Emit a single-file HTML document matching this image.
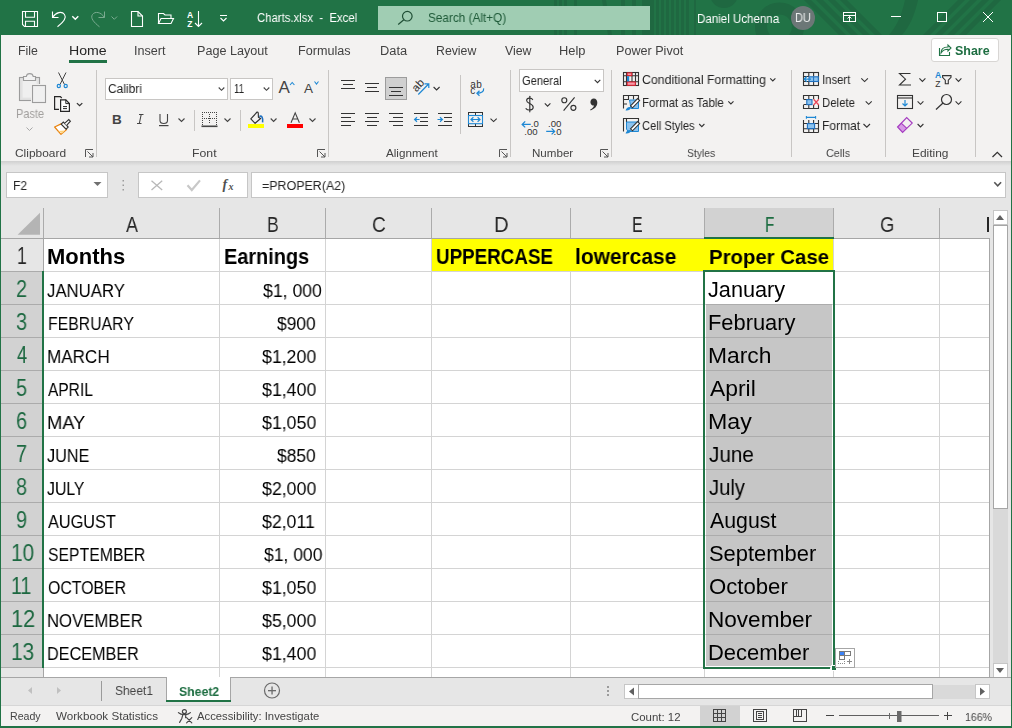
<!DOCTYPE html>
<html><head><meta charset="utf-8">
<style>
html,body{margin:0;padding:0;width:1012px;height:728px;overflow:hidden;background:#f3f2f1;}
.t{position:absolute;font-family:"Liberation Sans",sans-serif;white-space:pre;will-change:transform;}
svg{position:absolute;left:0;top:0;}
</style></head><body>
<svg width="1012" height="728" viewBox="0 0 1012 728" shape-rendering="crispEdges">
<defs>
<linearGradient id="sh" x1="0" y1="0" x2="0" y2="1"><stop offset="0" stop-color="#d0d0d0"/><stop offset="1" stop-color="#e6e6e6"/></linearGradient>
<clipPath id="tb"><rect x="0" y="0" width="1012" height="35"/></clipPath>
</defs>
<!-- title bar -->
<rect x="0" y="0" width="1012" height="35" fill="#217346"/>
<g clip-path="url(#tb)" fill="#1f6841" shape-rendering="geometricPrecision">
  <rect x="554" y="0" width="3" height="35"/><rect x="559" y="0" width="3" height="35"/><rect x="564" y="0" width="3" height="35"/><rect x="574" y="0" width="3" height="35"/>
  <path d="M602,0 L606,0 L612,35 L608,35 Z"/>
  <rect x="621" y="0" width="4" height="35"/><rect x="632" y="0" width="4" height="35"/>
  <rect x="642" y="0" width="12" height="35"/>
  <rect x="656" y="0" width="3" height="35"/><rect x="661" y="0" width="3" height="35"/><rect x="666" y="0" width="3" height="35"/><rect x="671" y="0" width="3" height="35"/><rect x="676" y="0" width="3" height="35"/><rect x="681" y="0" width="3" height="35"/><rect x="686" y="0" width="3" height="35"/><rect x="694" y="0" width="2" height="35"/>
  <circle cx="724" cy="-6" r="14"/>
  <circle cx="779.5" cy="27" r="18.5" fill="none" stroke="#1f6841" stroke-width="12"/>
  <path d="M804,0 L811,0 L846,35 L839,35 Z"/><path d="M816,0 L823,0 L858,35 L851,35 Z"/><path d="M828,0 L835,0 L870,35 L863,35 Z"/><path d="M840,0 L847,0 L882,35 L875,35 Z"/>
  <path d="M905,0 L918,0 C915,14 910,26 902,35 L889,35 C897,26 902,14 905,0 Z"/>
  <path d="M958,0 L965,0 L930,35 L923,35 Z"/><path d="M970,0 L977,0 L942,35 L935,35 Z"/><path d="M982,0 L989,0 L954,35 L947,35 Z"/><path d="M994,0 L1001,0 L966,35 L959,35 Z"/>
</g>
<!-- search box -->
<rect x="378" y="6" width="272" height="24" fill="#a0cdb3"/>
<!-- ribbon shadow & formula area -->
<rect x="0" y="161" width="1012" height="47" fill="#e6e6e6"/>
<rect x="0" y="161" width="1012" height="5" fill="url(#sh)"/>
<!-- name box, button box, formula box -->
<rect x="6.5" y="172.5" width="101" height="25" fill="#fff" stroke="#c6c6c6"/>
<rect x="138.5" y="172.5" width="109" height="25" fill="#fff" stroke="#c6c6c6"/>
<rect x="251.5" y="172.5" width="754" height="25" fill="#fff" stroke="#c6c6c6"/>
<!-- header row & row headers -->
<rect x="0" y="208" width="990" height="30" fill="#e6e6e6"/>
<rect x="0" y="238" width="43" height="439" fill="#e6e6e6"/>
<rect x="1" y="271" width="42" height="396" fill="#d2d2d2"/>
<rect x="704" y="208" width="129" height="30" fill="#d2d2d2"/>
<!-- grid white -->
<rect x="44" y="239" width="945" height="438" fill="#fff"/>
<!-- gridlines -->
<g fill="#d4d4d4">
<rect x="219" y="239" width="1" height="438"/><rect x="325" y="239" width="1" height="438"/><rect x="431" y="239" width="1" height="438"/><rect x="570" y="239" width="1" height="438"/><rect x="704" y="239" width="1" height="438"/><rect x="833" y="239" width="1" height="438"/><rect x="939" y="239" width="1" height="438"/>
<rect x="44" y="271" width="945" height="1"/><rect x="44" y="304" width="945" height="1"/><rect x="44" y="337" width="945" height="1"/><rect x="44" y="370" width="945" height="1"/><rect x="44" y="403" width="945" height="1"/><rect x="44" y="436" width="945" height="1"/><rect x="44" y="469" width="945" height="1"/><rect x="44" y="502" width="945" height="1"/><rect x="44" y="535" width="945" height="1"/><rect x="44" y="568" width="945" height="1"/><rect x="44" y="601" width="945" height="1"/><rect x="44" y="634" width="945" height="1"/><rect x="44" y="667" width="945" height="1"/>
</g>
<!-- header separators -->
<g fill="#ababab">
<rect x="219" y="208" width="1" height="30"/><rect x="325" y="208" width="1" height="30"/><rect x="431" y="208" width="1" height="30"/><rect x="570" y="208" width="1" height="30"/><rect x="704" y="208" width="1" height="30"/><rect x="833" y="208" width="1" height="30"/><rect x="939" y="208" width="1" height="30"/>
<rect x="43" y="208" width="1" height="30"/>
<rect x="1" y="271" width="42" height="1"/><rect x="1" y="304" width="42" height="1"/><rect x="1" y="337" width="42" height="1"/><rect x="1" y="370" width="42" height="1"/><rect x="1" y="403" width="42" height="1"/><rect x="1" y="436" width="42" height="1"/><rect x="1" y="469" width="42" height="1"/><rect x="1" y="502" width="42" height="1"/><rect x="1" y="535" width="42" height="1"/><rect x="1" y="568" width="42" height="1"/><rect x="1" y="601" width="42" height="1"/><rect x="1" y="634" width="42" height="1"/><rect x="1" y="667" width="42" height="1"/>
</g>
<rect x="0" y="238" width="990" height="1" fill="#a6a6a6"/>
<rect x="43" y="238" width="1" height="439" fill="#a6a6a6"/>
<!-- select all triangle -->
<polygon points="40,212.8 40,234.7 17.6,234.7" fill="#b4b4b4" shape-rendering="geometricPrecision"/>
<rect x="986.6" y="217" width="2.4" height="15" fill="#262626"/>
<!-- yellow -->
<rect x="432" y="239" width="401" height="32" fill="#ffff00"/>
<!-- selection fill -->
<rect x="706" y="305" width="126" height="361" fill="#c6c6c6"/>
<g fill="#acacac"><rect x="706" y="304" width="126" height="1"/><rect x="706" y="337" width="126" height="1"/><rect x="706" y="370" width="126" height="1"/><rect x="706" y="403" width="126" height="1"/><rect x="706" y="436" width="126" height="1"/><rect x="706" y="469" width="126" height="1"/><rect x="706" y="502" width="126" height="1"/><rect x="706" y="535" width="126" height="1"/><rect x="706" y="568" width="126" height="1"/><rect x="706" y="601" width="126" height="1"/><rect x="706" y="634" width="126" height="1"/></g>
<!-- selection border -->
<g fill="#217346">
<rect x="703" y="270" width="2" height="399"/>
<rect x="833" y="270" width="2" height="395"/>
<rect x="703" y="270" width="132" height="2"/>
<rect x="703" y="667" width="127" height="2"/>
<rect x="831" y="665" width="5" height="5" stroke="#fff" stroke-width="1"/>
<rect x="42" y="271" width="2" height="397"/>
<rect x="704" y="237" width="130" height="2"/>
</g>
<!-- paste options -->
<rect x="835.5" y="648.5" width="19" height="19" fill="#fff" stroke="#a6a6a6"/>
<rect x="839.5" y="651.5" width="5" height="4" fill="#3b82f6" stroke="#7a7a7a"/>
<rect x="844.5" y="651.5" width="6" height="4" fill="#fff" stroke="#7a7a7a"/>
<rect x="839.5" y="655.5" width="5" height="4" fill="#fff" stroke="#7a7a7a"/>
<g fill="#8a8a8a"><rect x="838" y="661" width="1" height="1"/><rect x="840" y="663" width="1" height="1"/><rect x="842" y="663" width="1" height="1"/><rect x="844" y="663" width="1" height="1"/><rect x="838" y="663" width="1" height="1"/><rect x="844" y="661" width="1" height="1"/><rect x="847" y="661" width="5" height="1"/><rect x="849" y="659" width="1" height="5"/></g>
<!-- vertical scrollbar -->
<rect x="989" y="238" width="1" height="440" fill="#a6a6a6"/>
<rect x="990" y="208" width="21" height="470" fill="#e6e6e6"/>
<rect x="993" y="225" width="15" height="438" fill="#d9d9d9"/>
<rect x="993.5" y="210.5" width="14" height="14" fill="#fff" stroke="#c6c6c6"/>
<rect x="993.5" y="225.5" width="14" height="283" fill="#fff" stroke="#a6a6a6"/>
<rect x="993.5" y="663.5" width="14" height="14" fill="#fff" stroke="#c6c6c6"/>
<polygon points="996,220 1004,220 1000,215" fill="#606060" shape-rendering="geometricPrecision"/>
<polygon points="996,668 1004,668 1000,673" fill="#606060" shape-rendering="geometricPrecision"/>
<!-- sheet tab bar -->
<rect x="1" y="677" width="1010" height="28" fill="#e6e6e6"/>
<rect x="0" y="677" width="1011" height="1" fill="#a6a6a6"/>
<rect x="166" y="677" width="65" height="25" fill="#fff"/>
<rect x="166" y="677" width="1" height="25" fill="#a6a6a6"/>
<rect x="230" y="677" width="1" height="25" fill="#a6a6a6"/>
<rect x="166" y="700" width="65" height="2" fill="#217346"/>
<rect x="101" y="681" width="1" height="20" fill="#9b9b9b"/>
<polygon points="32,687 32,694 28,690.5" fill="#c0c0c0" shape-rendering="geometricPrecision"/>
<polygon points="57,687 57,694 61,690.5" fill="#c0c0c0" shape-rendering="geometricPrecision"/>
<g shape-rendering="geometricPrecision"><circle cx="272" cy="690.5" r="7.5" fill="none" stroke="#6a6a6a" stroke-width="1.2"/><rect x="268" y="690" width="8" height="1.3" fill="#6a6a6a"/><rect x="271.4" y="686.5" width="1.3" height="8" fill="#6a6a6a"/></g>
<g fill="#9b9b9b"><rect x="607" y="686" width="2" height="2"/><rect x="607" y="690" width="2" height="2"/><rect x="607" y="694" width="2" height="2"/></g>
<!-- h scrollbar -->
<rect x="639" y="685" width="336" height="14" fill="#d9d9d9"/>
<rect x="624.5" y="684.5" width="14" height="14" fill="#fff" stroke="#c6c6c6"/>
<rect x="638.5" y="684.5" width="294" height="14" fill="#fff" stroke="#a6a6a6"/>
<rect x="975.5" y="684.5" width="14" height="14" fill="#fff" stroke="#c6c6c6"/>
<polygon points="634,687.5 634,695.5 629,691.5" fill="#606060" shape-rendering="geometricPrecision"/>
<polygon points="980,687.5 980,695.5 985,691.5" fill="#606060" shape-rendering="geometricPrecision"/>
<!-- status bar -->
<rect x="1" y="705" width="1010" height="21" fill="#f3f2f1"/>
<rect x="1" y="705" width="1010" height="1" fill="#d6d6d6"/>
<rect x="700" y="706" width="40" height="20" fill="#d2d2d2"/>
<!-- window border -->
<rect x="0" y="35" width="1" height="693" fill="#217346"/>
<rect x="1011" y="35" width="1" height="693" fill="#217346"/>
<rect x="0" y="726" width="1012" height="2" fill="#217346"/>
</svg>
<svg width="1012" height="728" viewBox="0 0 1012 728" fill="none" stroke-linecap="butt">
<!-- ===== title bar icons ===== -->
<g stroke="#fff" stroke-width="1.1">
  <path d="M22.5,11.5 H37.5 V26.5 H24.5 L22.5,24.5 Z"/>
  <path d="M25.5,11.5 V17.3 H34.5 V11.5"/>
  <path d="M25.5,26.5 V21.3 H34.5 V26.5"/>
  <path d="M52.5,11.5 V17.5 H58.5"/>
  <path d="M52.8,17.2 C56,12 62,11 64.5,14.5 C67,18 63,22.5 57.5,26.8"/>
  <path d="M72.3,16.3 L75.3,19.3 L78.3,16.3" stroke-width="1.4"/>
  <path d="M131.5,11.5 H138 L142.5,16 V26.5 H131.5 Z"/>
  <path d="M138,11.5 V16 H142.5"/>
  <path d="M158.5,23.5 V13.5 H163.5 L165,15 H171 V18"/>
  <path d="M158.5,23.5 L161,18.5 H173.5 L171,23.5 Z"/>
  <path d="M198.5,11 V26.5 M195,23 L198.5,26.5 L202,23"/>
  <path d="M220,15.5 H227 M220.5,18 L223.5,21 L226.5,18"/>
</g>
<g stroke="#fff" stroke-width="1" opacity="0.4">
  <path d="M104.5,11.5 V17.5 H98.5"/>
  <path d="M104.2,17.2 C101,12 95,11 92.5,14.5 C90,18 94,22.5 99.5,26.8"/>
  <path d="M111.5,16.5 L114.3,19.3 L117.1,16.5"/>
</g>
<text x="187" y="18.2" font-family="Liberation Sans" font-size="8.5" font-weight="bold" fill="#fff">A</text>
<text x="187.3" y="26.8" font-family="Liberation Sans" font-size="8.5" font-weight="bold" fill="#fff">Z</text>
<!-- search icon -->
<g stroke="#1f4e35" stroke-width="1.2"><circle cx="407.3" cy="16.2" r="4.8"/><path d="M403.8,19.8 L398.2,24.5"/></g>
<!-- avatar -->
<circle cx="803" cy="17.9" r="12" fill="#6c7777"/>
<!-- window controls -->
<g stroke="#fff" stroke-width="1">
  <rect x="843.5" y="12.5" width="12" height="9"/>
  <path d="M843.5,15.5 H855.5 M849.5,21 V16.5 M847.5,18.5 L849.5,16.5 L851.5,18.5"/>
  <path d="M891,16.5 H901"/>
  <rect x="937.5" y="12.5" width="9" height="9"/>
  <path d="M983,12 L993,22 M993,12 L983,22"/>
</g>
<!-- tab underline -->
<rect x="69" y="60" width="38" height="3" fill="#217346"/>
<!-- share button -->
<rect x="931.5" y="38.5" width="67" height="23" rx="2.5" fill="#fff" stroke="#d8d6d4"/>
<g stroke="#217346" stroke-width="1.1">
  <path d="M939.5,48 V55.5 H949.5 V52"/>
  <path d="M941,53 C941,48.5 944,47 948,47 V45 L951,48 L948,51 V49.3 C945,49.3 942.5,50.5 941,53 Z"/>
</g>
<!-- ===== ribbon separators ===== -->
<g fill="#c8c6c4">
  <rect x="96" y="70" width="1" height="87"/>
  <rect x="328" y="70" width="1" height="87"/>
  <rect x="510" y="70" width="1" height="87"/>
  <rect x="611" y="70" width="1" height="87"/>
  <rect x="791" y="70" width="1" height="87"/>
  <rect x="885" y="70" width="1" height="87"/>
  <rect x="975" y="70" width="1" height="87"/>
  <rect x="194" y="110" width="1" height="21"/>
  <rect x="240" y="110" width="1" height="21"/>
  <rect x="460" y="75" width="1" height="59"/>
</g>
<!-- clipboard group -->
<g stroke="#9c9c9c" stroke-width="1.1">
  <rect x="19.5" y="77.5" width="20" height="23" fill="#e2e2e2"/>
  <rect x="22.6" y="80.6" width="14" height="17" fill="#efefef" stroke="none"/>
  <path d="M23.5,80.5 V76.5 H26.3 C26.8,72.6 32.7,72.6 33.2,76.5 H35.5 V80.5 Z" fill="#f2f2f2"/>
  <rect x="31" y="84" width="16" height="20" fill="#f3f2f1" stroke="none"/>
  <rect x="32.5" y="85.5" width="13" height="17" fill="#f0f0f0"/>
</g>
<path d="M26.5,127.5 L29.5,130.5 L32.5,127.5" stroke="#a8a8a8"/>
<g stroke="#444" stroke-width="1">
  <path d="M58.5,72.5 L64.5,84.5 M66,72.5 L60,84.5"/>
</g>
<g stroke="#1e88d4" stroke-width="1.2"><circle cx="58.8" cy="86" r="1.6"/><circle cx="65.7" cy="86" r="1.6"/></g>
<g stroke="#262626" stroke-width="1.2">
  <path d="M59,109.4 H54.6 V96.6 H60.3 L61.8,98"/>
  <path d="M60.6,111.4 V99.8 H65.8 L69.4,103.6 V111.4 Z" fill="#fff"/>
  <path d="M65.8,99.8 V103.6 H69.4" stroke-width="1"/>
  <path d="M63,106.6 H67 M63,108.6 H67" stroke-width="1"/>
</g>
<path d="M76.9,103.1 L79.6,105.7 L82.3,103.1" stroke="#333" stroke-width="1.3"/>
<g>
  <path d="M54.6,127 L61.6,123.6 L66.6,129.6 L61,134.4 Z" fill="#fff" stroke="#e8830f" stroke-width="1.2" stroke-linejoin="round"/>
  <path d="M58,131 L62.5,133.2 L64.8,130.6 Z" fill="#ffd27a"/>
  <path d="M61.2,124.2 L63.3,122.1 L68.2,127 L66.1,129.1 Z" fill="#fff" stroke="#333" stroke-width="1.1"/>
  <path d="M64.6,123.4 L68.8,119.6 L70.4,121.2 L66.6,125.4" fill="#fff" stroke="#333" stroke-width="1.1"/>
</g>
<!-- font group -->
<rect x="105.5" y="78.5" width="122" height="21" fill="#fff" stroke="#c8c6c4"/>
<rect x="230.5" y="78.5" width="42" height="21" fill="#fff" stroke="#c8c6c4"/>
<g stroke="#444" stroke-width="1.1">
  <path d="M218.7,87.5 L221.5,90.3 L224.3,87.5"/>
  <path d="M263.7,87.5 L266.5,90.3 L269.3,87.5"/>
  <path d="M178.5,118.5 L181.5,121.5 L184.5,118.5"/>
  <path d="M224.5,118.5 L227.5,121.5 L230.5,118.5"/>
  <path d="M270.7,118.5 L273.6,121.5 L276.5,118.5"/>
  <path d="M309.5,118.5 L312.5,121.5 L315.5,118.5"/>
</g>
<text x="278.5" y="93" font-family="Liberation Sans" font-size="17" fill="#444">A</text>
<text x="304" y="93" font-family="Liberation Sans" font-size="13.5" fill="#444">A</text>
<g stroke="#1e88d4" stroke-width="1.1"><path d="M290,85 L292.2,82.5 L294.4,85"/><path d="M314.5,81.5 L316.5,84 L318.5,81.5"/></g>
<text x="112" y="123.8" font-family="Liberation Sans" font-size="13.5" font-weight="bold" fill="#444">B</text>
<path d="M139,114.5 H143.5 M137,123.5 H141.5 M141.2,114.5 L139.3,123.5" stroke="#444" stroke-width="1.1"/>
<path d="M160,114 V120.5 C160,124.5 167.5,124.5 167.5,120.5 V114" stroke="#444" stroke-width="1.1"/>
<rect x="159" y="125" width="9.5" height="1.2" fill="#444"/>
<g fill="#444">
  <path d="M202,112 h1v1h-1z M204,112 h1v1h-1z M206,112 h1v1h-1z M208,112 h1v1h-1z M210,112 h1v1h-1z M212,112 h1v1h-1z M214,112 h1v1h-1z M216,112 h1v1h-1z"/>
  <path d="M202,114 h1v1h-1z M202,116 h1v1h-1z M202,118 h1v1h-1z M202,120 h1v1h-1z M202,122 h1v1h-1z M202,124 h1v1h-1z"/>
  <path d="M216,114 h1v1h-1z M216,116 h1v1h-1z M216,118 h1v1h-1z M216,120 h1v1h-1z M216,122 h1v1h-1z M216,124 h1v1h-1z"/>
  <path d="M209,114 h1v1h-1z M209,116 h1v1h-1z M209,120 h1v1h-1z M209,122 h1v1h-1z M204,118 h1v1h-1z M206,118 h1v1h-1z M208,118 h3v1h-3z M212,118 h1v1h-1z M214,118 h1v1h-1z"/>
  <rect x="201.5" y="125.5" width="16" height="1.6"/>
</g>
<path d="M256.1,113.2 C256.7,111.7 258.3,111.9 258.3,113.4 L258.4,117.2 L260.6,118.5 L255.1,123.3 L250.8,118.9 Z" stroke="#333" stroke-width="1.15" stroke-linejoin="round"/>
<path d="M259.4,116.6 C261.6,115 263.2,117.6 262.6,122.3" stroke="#1e6fbf" stroke-width="1.6"/>
<rect x="248" y="124" width="16" height="4" fill="#ffff00"/>
<path d="M291,122.8 L295.2,112.8 L299.4,122.8 M292.5,119 H298" stroke="#444" stroke-width="1.1"/>
<rect x="287" y="124" width="16" height="4" fill="#ff0000"/>
<!-- dialog launchers -->
<g stroke="#555" stroke-width="1">
  <path d="M85.5,157 V149.5 H93 M87.5,151.5 L93,157 M93,153 V157 H89"/>
  <path d="M317.5,157 V149.5 H325 M319.5,151.5 L325,157 M325,153 V157 H321"/>
  <path d="M499.5,157 V149.5 H507 M501.5,151.5 L507,157 M507,153 V157 H503"/>
  <path d="M600.5,157 V149.5 H608 M602.5,151.5 L608,157 M608,153 V157 H604"/>
</g>
<!-- alignment group -->
<rect x="385.5" y="77.5" width="21" height="22" fill="#d0d0d0" stroke="#9c9c9c"/>
<g stroke="#333" stroke-width="1.05" shape-rendering="crispEdges">
  <path d="M341,80.5 H355 M343,84.5 H353 M341,88.5 H355"/>
  <path d="M365,83.5 H379 M367,87.5 H377 M365,91.5 H379"/>
  <path d="M389,87.5 H403 M391,91.5 H401 M389,95.5 H403"/>
  <path d="M341,113.5 H355 M341,117.5 H351 M341,121.5 H355 M341,125.5 H351"/>
  <path d="M365,113.5 H379 M367,117.5 H377 M365,121.5 H379 M367,125.5 H377"/>
  <path d="M389,113.5 H403 M393,117.5 H403 M389,121.5 H403 M393,125.5 H403"/>
  <path d="M414,113.5 H428 M420,117.5 H428 M420,121.5 H428 M414,125.5 H428"/>
  <path d="M438,113.5 H452 M444,117.5 H452 M444,121.5 H452 M438,125.5 H452"/>
  <path d="M468.5,115 V112.5 H482.5 V115 M468.5,124 V126.5 H482.5 V124 M475.5,112.5 V115 M475.5,124 V126.5"/>
</g>
<g stroke="#333" stroke-width="1.1">
  <path d="M433.6,87 L436.6,90 L439.6,87"/>
  <path d="M490.5,118.6 L493.6,121.6 L496.7,118.6"/>
</g>
<g stroke="#1e88d4" stroke-width="1.2">
  <path d="M419.5,119.5 H414.8 M417,117.2 L414.6,119.5 L417,121.8"/>
  <path d="M437.5,119.5 H442.2 M440,117.2 L442.4,119.5 L440,121.8"/>
  <path d="M418.3,94.5 L428.6,84 M424.5,83.8 H428.8 V88"/>
  <path d="M483.6,88.4 C484.2,91.6 481.2,93.3 477.2,93.3 M479.5,90.8 L476.9,93.3 L479.5,95.8"/>
  <path d="M471.2,119.5 H479.8 M473.4,117.3 L471,119.5 L473.4,121.7 M477.6,117.3 L480,119.5 L477.6,121.7"/>
</g>
<rect x="468.5" y="115.5" width="14" height="8.2" stroke="#1e88d4" stroke-width="1.1"/>
<text x="411.2" y="89.6" font-family="Liberation Sans" font-size="11.2" fill="#333" transform="rotate(-48 417 85)">ab</text>
<text x="470.2" y="87.7" font-family="Liberation Sans" font-size="10" fill="#333" letter-spacing="0.4">ab</text>
<text x="470.2" y="94.3" font-family="Liberation Sans" font-size="10" fill="#333">c</text>
<!-- number group -->
<rect x="519.5" y="69.5" width="84" height="22" fill="#fff" stroke="#c8c6c4"/>
<path d="M594.7,79.8 L597.5,82.6 L600.3,79.8" stroke="#333" stroke-width="1.1"/>
<g stroke="#333" stroke-width="1.15" stroke-linecap="round">
<path d="M532.6,99.6 C531.6,97.6 526.8,97.4 526.6,100.4 C526.4,103.6 533.2,103.4 533.2,107.2 C533.2,110.4 527.8,110.8 526,108.6"/>
<path d="M529.8,96.2 V111.8"/>
</g>
<path d="M544.8,103.3 L547.6,106.1 L550.4,103.3" stroke="#333" stroke-width="1.1"/>
<g stroke="#333" stroke-width="1.15"><circle cx="564.3" cy="100.2" r="2.5"/><circle cx="573.4" cy="107.8" r="2.5"/><path d="M574.6,97.4 L563.6,110.6"/></g>
<path d="M593.8,98.6 C596,98.6 597.3,100.3 597.3,102.6 C597.3,106.4 594.6,109.2 590.6,110.4 L590.2,109.6 C592.4,108.6 593.6,107.2 594,105.6 C592,105.6 590.4,104.2 590.4,102.2 C590.4,100.2 591.8,98.6 593.8,98.6 Z" fill="#333"/>
<g font-family="Liberation Sans" font-size="9.6" fill="#333">
<text x="530.8" y="126.5">.0</text>
<text x="524.3" y="134.8">.00</text>
<text x="548" y="126.5">.00</text>
<text x="553.6" y="134.8">.0</text>
</g>
<g stroke="#1e88d4" stroke-width="1.3"><path d="M522.2,124.4 H530.8 M525.2,121.4 L522.2,124.4 L525.2,127.4"/><path d="M546.2,131.4 H554.6 M551.6,128.4 L554.6,131.4 L551.6,134.4"/></g>
<!-- styles group -->
<g stroke="#333" stroke-width="1.1">
  <rect x="623.5" y="72.5" width="15" height="13"/>
  <path d="M626.5,72.5 V85.5 M632,72.5 V85.5 M635.5,72.5 V85.5 M623.5,75.8 H638.5 M623.5,81.7 H638.5"/>
</g>
<rect x="627.2" y="72.9" width="4.6" height="2.7" fill="#f59aa8" stroke="#e0202e" stroke-width="1"/>
<rect x="627.2" y="82" width="8.1" height="3.3" fill="#f59aa8" stroke="#e0202e" stroke-width="1"/>
<rect x="627" y="76.2" width="2.2" height="5.2" fill="#1e88d4"/>
<g stroke="#333" stroke-width="1.1">
  <path d="M623.5,108.5 V95.5 H638.5 V99"/>
  <path d="M623.5,99.5 H629 M628.5,95.5 V99.5 M633.5,95.5 V99.5 M623.5,104 H627"/>
  <path d="M623.5,131.5 V118.5 H638.5 V122"/>
  <path d="M626.5,118.5 V122"/>
</g>
<path d="M629.5,100 H638.5 V108.5 H631 Z" fill="#8cc3ef" stroke="#1e88d4" stroke-width="1"/>
<path d="M626.5,122 H638.5 V131.5 H628 L626.5,129 Z" fill="#8cc3ef" stroke="#1e88d4" stroke-width="1"/>
<g stroke="#333" stroke-width="1.1" fill="#fff"><path d="M630.5,105.8 L637.6,98.6 L639.6,100.6 L632.5,107.8 Z"/><path d="M630.5,128.8 L637.6,121.6 L639.6,123.6 L632.5,130.8 Z"/></g>
<path d="M625.6,110.4 C626.4,107.8 628.4,106.2 631,107.2 C630.6,109.8 628.2,110.8 625.6,110.4 Z" fill="#1e88d4"/>
<path d="M625.6,133.4 C626.4,130.8 628.4,129.2 631,130.2 C630.6,132.8 628.2,133.8 625.6,133.4 Z" fill="#1e88d4"/>
<g stroke="#333" stroke-width="1.1">
  <path d="M770.2,78.4 L772.8,81 L775.4,78.4"/>
  <path d="M728.3,101.3 L730.9,103.9 L733.5,101.3"/>
  <path d="M699.2,124 L701.8,126.6 L704.4,124"/>
</g>
<!-- cells group -->
<g stroke="#333" stroke-width="1.1">
  <rect x="803.5" y="72.5" width="15" height="13"/>
  <path d="M808.8,72.5 V76.5 M813.6,72.5 V76.5 M808.8,81.5 V85.5 M813.6,81.5 V85.5 M803.5,76.5 H809 M803.5,81.5 H809"/>
  <path d="M861.3,78.4 L864.6,81.6 L867.9,78.4"/>
  <path d="M865.7,101.3 L868.7,104.3 L871.7,101.3"/>
  <path d="M863.5,124 L866.8,127.2 L870,124"/>
  <path d="M803.5,99 V95.5 H818.5 V99 M803.5,105 V108.5 H818.5 V105 M808.8,95.5 V99 M813.6,95.5 V99 M808.8,105 V108.5 M813.6,105 V108.5 M803.5,99.5 H807 M803.5,104.5 H807"/>
  <path d="M803.5,132.5 V120 M818.5,132.5 V120 M803.5,132.5 H818.5 M803.5,128.7 H818.5 M803.5,123.5 H807 M815,123.5 H818.5 M808.8,128.7 V132.5 M813.6,128.7 V132.5 M808.8,120 V123.5 M813.6,120 V123.5"/>
</g>
<rect x="809" y="76.8" width="9.3" height="4.7" fill="#8cc3ef" stroke="#1e6fbf" stroke-width="1.1"/>
<path d="M813.6,76.8 V81.5" stroke="#1e6fbf" stroke-width="1"/>
<path d="M811,79.1 H804.2 M806.8,76.5 L804.2,79.1 L806.8,81.7" stroke="#1e88d4" stroke-width="1.3"/>
<rect x="806.8" y="99.6" width="5.2" height="5" fill="#8cc3ef" stroke="#1e6fbf" stroke-width="1.1"/>
<path d="M813.6,99.2 L818.8,105 M818.8,99.2 L813.6,105" stroke="#e9495a" stroke-width="1.3"/>
<rect x="807.4" y="123.6" width="7.2" height="5" fill="#8cc3ef" stroke="#1e6fbf" stroke-width="1.1"/>
<path d="M806.4,117.4 H815.6 M806.4,116 V118.8 M815.6,116 V118.8" stroke="#1e88d4" stroke-width="1.1"/>
<!-- editing group -->
<path d="M910.5,73.5 H899.5 L905.5,79.2 L899.5,85 H911" stroke="#333" stroke-width="1.1"/>
<path d="M919.4,78.4 L922.4,81.4 L925.4,78.4" stroke="#333" stroke-width="1.1"/>
<text x="935" y="77.9" font-family="Liberation Sans" font-size="8.6" font-weight="bold" fill="#1e88d4">A</text>
<text x="935.2" y="86.8" font-family="Liberation Sans" font-size="8.6" fill="#333">Z</text>
<path d="M942.6,75.6 H951 V77.3 L948.3,80.2 V83.8 H945.3 V80.2 L942.6,77.3 Z" stroke="#333" stroke-width="1.1"/>
<path d="M955.6,78.4 L958.5,81.4 L961.4,78.4" stroke="#333" stroke-width="1.1"/>
<g stroke="#333" stroke-width="1.1"><rect x="897.5" y="95.5" width="15" height="13"/><path d="M897.5,98 H912.5"/><path d="M917.6,101.3 L920.5,104.3 L923.4,101.3"/></g>
<path d="M905,100 V106 M902.5,103.5 L905,106 L907.5,103.5" stroke="#1e88d4" stroke-width="1.2"/>
<g stroke="#333" stroke-width="1.2"><circle cx="946.5" cy="99.5" r="5"/><path d="M943,103 L936,109.5"/></g>
<path d="M955.6,101.3 L958.5,104.3 L961.4,101.3" stroke="#333" stroke-width="1.1"/>
<path d="M897.6,127 L901.2,123.1 L906.8,128.4 L902.6,132.4 Z" fill="#d79be6"/>
<path d="M897.6,127 L906.7,117.6 L912.2,123.1 L902.6,132.4 Z" stroke="#a53dc1" stroke-width="1.2"/>
<path d="M901.2,123.1 L906.8,128.4" stroke="#a53dc1" stroke-width="1.1"/>
<path d="M917.6,124 L920.5,127 L923.4,124" stroke="#333" stroke-width="1.1"/>
<path d="M992.5,157 L997.3,152.3 L1002,157" stroke="#333" stroke-width="1.3"/>
<!-- formula bar icons -->
<polygon points="93.5,182 101.5,182 97.5,186" fill="#707070"/>
<g fill="#9b9b9b"><rect x="122.5" y="180" width="1.5" height="1.5"/><rect x="122.5" y="184.5" width="1.5" height="1.5"/><rect x="122.5" y="189" width="1.5" height="1.5"/></g>
<path d="M151.5,180.8 L162.2,190 M162.2,180.8 L151.5,190" stroke="#b8b8b8" stroke-width="1.3"/>
<path d="M187.5,185.2 L191.8,190 L200,180.4" stroke="#c8c8c8" stroke-width="2.2"/>
<text x="222.5" y="189" font-family="Liberation Serif" font-size="14" font-style="italic" fill="#505050" font-weight="bold">f</text>
<text x="228.6" y="190.2" font-family="Liberation Serif" font-size="10" font-style="italic" font-weight="bold" fill="#505050">x</text>
<path d="M994.3,182.3 L997.7,185.8 L1001.1,182.3" stroke="#555" stroke-width="1.6"/>
<!-- status bar icons -->
<g stroke="#444" stroke-width="1.1" shape-rendering="crispEdges">
  <rect x="713.5" y="709.5" width="12" height="12"/>
  <path d="M713.5,713.5 H725.5 M713.5,717.5 H725.5 M717.5,709.5 V721.5 M721.5,709.5 V721.5"/>
  <rect x="753.5" y="709.5" width="13" height="12"/>
  <rect x="756.5" y="711.5" width="7" height="8"/>
  <path d="M758,713.5 H762 M758,715.5 H762 M758,717.5 H762"/>
  <rect x="793.5" y="709.5" width="13" height="12"/>
  <path d="M793.5,716.5 H801.5 V709.5 M796.5,709.5 V716.5 M798.5,709.5 V716.5"/>
  <path d="M826,715.5 H834 M944,715.5 H952 M947.5,712 V720"/>
</g>
<rect x="839" y="715" width="100" height="1" fill="#606060"/>
<rect x="889" y="713" width="1" height="6" fill="#6a6a6a"/>
<rect x="897" y="711" width="4.5" height="11" fill="#6a6a6a"/>
<g stroke="#444" stroke-width="1.15" fill="none" stroke-linecap="round">
  <circle cx="184.4" cy="711.6" r="2"/>
  <path d="M178.4,712.6 C180,714.2 181.5,714.6 184.4,714.6 C187.3,714.6 188.8,714.2 190.4,712.6"/>
  <path d="M182.8,714.8 L181.8,718.5 L179.6,722.4 M185.8,714.8 L185.6,717.6"/>
  <path d="M186.6,717.6 L191.8,722.8 M191.8,717.6 L186.6,722.8"/>
</g>
</svg>

<div class="t" style="left:257.02px;top:11.50px;font-size:12.899px;line-height:12.899px;font-weight:400;color:#ffffff;transform:scaleX(0.8804);transform-origin:0 0;">Charts.xlsx  -  Excel</div>
<div class="t" style="left:428.08px;top:11.72px;font-size:12.754px;line-height:12.754px;font-weight:400;color:#1d5937;transform:scaleX(0.9229);transform-origin:0 0;">Search (Alt+Q)</div>
<div class="t" style="left:697.46px;top:12.99px;font-size:12.319px;line-height:12.319px;font-weight:400;color:#ffffff;transform:scaleX(0.9384);transform-origin:0 0;">Daniel Uchenna</div>
<div class="t" style="left:795.07px;top:12.66px;font-size:11.884px;line-height:11.884px;font-weight:400;color:#eef0f0;transform:scaleX(0.9267);transform-origin:0 0;">DU</div>
<div class="t" style="left:17.72px;top:44.79px;font-size:12.319px;line-height:12.319px;font-weight:400;color:#424242;transform:scaleX(0.9778);transform-origin:0 0;">File</div>
<div class="t" style="left:68.95px;top:44.79px;font-size:12.319px;line-height:12.319px;font-weight:400;color:#262626;transform:scaleX(1.1484);transform-origin:0 0;">Home</div>
<div class="t" style="left:133.88px;top:44.79px;font-size:12.319px;line-height:12.319px;font-weight:400;color:#424242;transform:scaleX(1.0233);transform-origin:0 0;">Insert</div>
<div class="t" style="left:197.07px;top:44.79px;font-size:12.319px;line-height:12.319px;font-weight:400;color:#424242;transform:scaleX(1.0250);transform-origin:0 0;">Page Layout</div>
<div class="t" style="left:297.98px;top:44.79px;font-size:12.319px;line-height:12.319px;font-weight:400;color:#424242;transform:scaleX(1.0240);transform-origin:0 0;">Formulas</div>
<div class="t" style="left:379.66px;top:44.79px;font-size:12.319px;line-height:12.319px;font-weight:400;color:#424242;transform:scaleX(1.0440);transform-origin:0 0;">Data</div>
<div class="t" style="left:435.70px;top:44.79px;font-size:12.319px;line-height:12.319px;font-weight:400;color:#424242;">Review</div>
<div class="t" style="left:504.70px;top:44.79px;font-size:12.319px;line-height:12.319px;font-weight:400;color:#424242;transform:scaleX(1.0038);transform-origin:0 0;">View</div>
<div class="t" style="left:558.65px;top:44.79px;font-size:12.319px;line-height:12.319px;font-weight:400;color:#424242;transform:scaleX(1.0458);transform-origin:0 0;">Help</div>
<div class="t" style="left:616.18px;top:44.79px;font-size:12.319px;line-height:12.319px;font-weight:400;color:#424242;transform:scaleX(1.0246);transform-origin:0 0;">Power Pivot</div>
<div class="t" style="left:954.91px;top:44.87px;font-size:12.464px;line-height:12.464px;font-weight:700;color:#1e6e42;transform:scaleX(0.9909);transform-origin:0 0;">Share</div>
<div class="t" style="left:16.28px;top:108.56px;font-size:11.884px;line-height:11.884px;font-weight:400;color:#a19f9d;transform:scaleX(0.9241);transform-origin:0 0;">Paste</div>
<div class="t" style="left:108.37px;top:82.60px;font-size:12.899px;line-height:12.899px;font-weight:400;color:#262626;transform:scaleX(0.9286);transform-origin:0 0;">Calibri</div>
<div class="t" style="left:233.55px;top:82.60px;font-size:12.899px;line-height:12.899px;font-weight:400;color:#262626;transform:scaleX(0.7500);transform-origin:0 0;">11</div>
<div class="t" style="left:15.07px;top:147.90px;font-size:11.594px;line-height:11.594px;font-weight:400;color:#444444;transform:scaleX(1.0292);transform-origin:0 0;">Clipboard</div>
<div class="t" style="left:192.44px;top:147.90px;font-size:11.594px;line-height:11.594px;font-weight:400;color:#444444;transform:scaleX(1.0591);transform-origin:0 0;">Font</div>
<div class="t" style="left:386.10px;top:147.90px;font-size:11.594px;line-height:11.594px;font-weight:400;color:#444444;transform:scaleX(1.0059);transform-origin:0 0;">Alignment</div>
<div class="t" style="left:532.21px;top:147.90px;font-size:11.594px;line-height:11.594px;font-weight:400;color:#444444;transform:scaleX(0.9900);transform-origin:0 0;">Number</div>
<div class="t" style="left:687.21px;top:147.90px;font-size:11.594px;line-height:11.594px;font-weight:400;color:#444444;transform:scaleX(0.8933);transform-origin:0 0;">Styles</div>
<div class="t" style="left:825.96px;top:147.90px;font-size:11.594px;line-height:11.594px;font-weight:400;color:#444444;transform:scaleX(0.9375);transform-origin:0 0;">Cells</div>
<div class="t" style="left:912.07px;top:147.90px;font-size:11.594px;line-height:11.594px;font-weight:400;color:#444444;transform:scaleX(1.0294);transform-origin:0 0;">Editing</div>
<div class="t" style="left:522.41px;top:75.05px;font-size:12.609px;line-height:12.609px;font-weight:400;color:#262626;transform:scaleX(0.8860);transform-origin:0 0;">General</div>
<div class="t" style="left:641.73px;top:74.12px;font-size:12.754px;line-height:12.754px;font-weight:400;color:#262626;transform:scaleX(0.9654);transform-origin:0 0;">Conditional Formatting</div>
<div class="t" style="left:641.80px;top:97.02px;font-size:12.754px;line-height:12.754px;font-weight:400;color:#262626;transform:scaleX(0.8967);transform-origin:0 0;">Format as Table</div>
<div class="t" style="left:641.83px;top:119.72px;font-size:12.754px;line-height:12.754px;font-weight:400;color:#262626;transform:scaleX(0.8746);transform-origin:0 0;">Cell Styles</div>
<div class="t" style="left:822.31px;top:74.02px;font-size:12.754px;line-height:12.754px;font-weight:400;color:#262626;transform:scaleX(0.8903);transform-origin:0 0;">Insert</div>
<div class="t" style="left:822.31px;top:97.02px;font-size:12.754px;line-height:12.754px;font-weight:400;color:#262626;transform:scaleX(0.8943);transform-origin:0 0;">Delete</div>
<div class="t" style="left:822.26px;top:119.72px;font-size:12.754px;line-height:12.754px;font-weight:400;color:#262626;transform:scaleX(0.9436);transform-origin:0 0;">Format</div>
<div class="t" style="left:13.35px;top:179.50px;font-size:12.899px;line-height:12.899px;font-weight:400;color:#262626;transform:scaleX(0.9462);transform-origin:0 0;">F2</div>
<div class="t" style="left:261.73px;top:179.50px;font-size:12.899px;line-height:12.899px;font-weight:400;color:#262626;transform:scaleX(0.9655);transform-origin:0 0;">=PROPER(A2)</div>
<div class="t" style="left:126.40px;top:213.74px;font-size:22.319px;line-height:22.319px;font-weight:400;color:#262626;transform:scaleX(0.8067);transform-origin:0 0;">A</div>
<div class="t" style="left:266.62px;top:213.74px;font-size:22.319px;line-height:22.319px;font-weight:400;color:#262626;transform:scaleX(0.7917);transform-origin:0 0;">B</div>
<div class="t" style="left:372.04px;top:213.74px;font-size:22.319px;line-height:22.319px;font-weight:400;color:#262626;transform:scaleX(0.8571);transform-origin:0 0;">C</div>
<div class="t" style="left:494.48px;top:213.74px;font-size:22.319px;line-height:22.319px;font-weight:400;color:#262626;transform:scaleX(0.9077);transform-origin:0 0;">D</div>
<div class="t" style="left:632.17px;top:213.74px;font-size:22.319px;line-height:22.319px;font-weight:400;color:#262626;transform:scaleX(0.7167);transform-origin:0 0;">E</div>
<div class="t" style="left:765.14px;top:213.74px;font-size:22.319px;line-height:22.319px;font-weight:400;color:#1e6e42;transform:scaleX(0.6818);transform-origin:0 0;">F</div>
<div class="t" style="left:879.57px;top:213.74px;font-size:22.319px;line-height:22.319px;font-weight:400;color:#262626;transform:scaleX(0.8267);transform-origin:0 0;">G</div>
<div class="t" style="left:16.56px;top:245.23px;font-size:23.043px;line-height:23.043px;font-weight:400;color:#262626;transform:scaleX(0.7700);transform-origin:0 0;">1</div>
<div class="t" style="left:16.44px;top:278.23px;font-size:23.043px;line-height:23.043px;font-weight:400;color:#1c6840;transform:scaleX(0.8636);transform-origin:0 0;">2</div>
<div class="t" style="left:16.44px;top:311.23px;font-size:23.043px;line-height:23.043px;font-weight:400;color:#1c6840;transform:scaleX(0.8636);transform-origin:0 0;">3</div>
<div class="t" style="left:17.30px;top:344.23px;font-size:23.043px;line-height:23.043px;font-weight:400;color:#1c6840;transform:scaleX(0.7917);transform-origin:0 0;">4</div>
<div class="t" style="left:16.44px;top:377.23px;font-size:23.043px;line-height:23.043px;font-weight:400;color:#1c6840;transform:scaleX(0.8636);transform-origin:0 0;">5</div>
<div class="t" style="left:16.44px;top:410.23px;font-size:23.043px;line-height:23.043px;font-weight:400;color:#1c6840;transform:scaleX(0.8636);transform-origin:0 0;">6</div>
<div class="t" style="left:16.44px;top:443.23px;font-size:23.043px;line-height:23.043px;font-weight:400;color:#1c6840;transform:scaleX(0.8636);transform-origin:0 0;">7</div>
<div class="t" style="left:16.44px;top:476.23px;font-size:23.043px;line-height:23.043px;font-weight:400;color:#1c6840;transform:scaleX(0.8636);transform-origin:0 0;">8</div>
<div class="t" style="left:16.44px;top:509.23px;font-size:23.043px;line-height:23.043px;font-weight:400;color:#1c6840;transform:scaleX(0.8636);transform-origin:0 0;">9</div>
<div class="t" style="left:10.89px;top:542.23px;font-size:23.043px;line-height:23.043px;font-weight:400;color:#1c6840;transform:scaleX(0.9043);transform-origin:0 0;">10</div>
<div class="t" style="left:11.00px;top:575.23px;font-size:23.043px;line-height:23.043px;font-weight:400;color:#1c6840;transform:scaleX(0.8524);transform-origin:0 0;">11</div>
<div class="t" style="left:10.81px;top:608.23px;font-size:23.043px;line-height:23.043px;font-weight:400;color:#1c6840;transform:scaleX(0.9455);transform-origin:0 0;">12</div>
<div class="t" style="left:10.89px;top:641.23px;font-size:23.043px;line-height:23.043px;font-weight:400;color:#1c6840;transform:scaleX(0.9043);transform-origin:0 0;">13</div>
<div class="t" style="left:46.87px;top:246.70px;font-size:21.304px;line-height:21.304px;font-weight:700;color:#000000;transform:scaleX(1.0324);transform-origin:0 0;">Months</div>
<div class="t" style="left:224.07px;top:246.70px;font-size:21.304px;line-height:21.304px;font-weight:700;color:#000000;transform:scaleX(0.9348);transform-origin:0 0;">Earnings</div>
<div class="t" style="left:436.12px;top:246.90px;font-size:21.304px;line-height:21.304px;font-weight:700;color:#000000;transform:scaleX(0.8824);transform-origin:0 0;">UPPERCASE</div>
<div class="t" style="left:574.52px;top:246.90px;font-size:21.304px;line-height:21.304px;font-weight:700;color:#000000;transform:scaleX(0.9832);transform-origin:0 0;">lowercase</div>
<div class="t" style="left:708.82px;top:246.97px;font-size:20.870px;line-height:20.870px;font-weight:700;color:#000000;transform:scaleX(0.9769);transform-origin:0 0;">Proper Case</div>
<div class="t" style="left:46.50px;top:281.78px;font-size:18.841px;line-height:18.841px;font-weight:400;color:#000000;transform:scaleX(0.8897);transform-origin:0 0;">JANUARY</div>
<div class="t" style="left:263.30px;top:281.87px;font-size:18.261px;line-height:18.261px;font-weight:400;color:#000000;transform:scaleX(0.9667);transform-origin:0 0;">$1, 000</div>
<div class="t" style="left:707.90px;top:279.50px;font-size:21.304px;line-height:21.304px;font-weight:400;color:#000000;transform:scaleX(1.0187);transform-origin:0 0;">January</div>
<div class="t" style="left:47.62px;top:314.78px;font-size:18.841px;line-height:18.841px;font-weight:400;color:#000000;transform:scaleX(0.8400);transform-origin:0 0;">FEBRUARY</div>
<div class="t" style="left:276.70px;top:314.87px;font-size:18.261px;line-height:18.261px;font-weight:400;color:#000000;transform:scaleX(0.9525);transform-origin:0 0;">$900</div>
<div class="t" style="left:708.25px;top:312.50px;font-size:21.304px;line-height:21.304px;font-weight:400;color:#000000;transform:scaleX(1.0265);transform-origin:0 0;">February</div>
<div class="t" style="left:47.28px;top:347.78px;font-size:18.841px;line-height:18.841px;font-weight:400;color:#000000;transform:scaleX(0.9076);transform-origin:0 0;">MARCH</div>
<div class="t" style="left:262.00px;top:347.87px;font-size:18.261px;line-height:18.261px;font-weight:400;color:#000000;transform:scaleX(0.9709);transform-origin:0 0;">$1,200</div>
<div class="t" style="left:708.16px;top:345.50px;font-size:21.304px;line-height:21.304px;font-weight:400;color:#000000;transform:scaleX(1.0714);transform-origin:0 0;">March</div>
<div class="t" style="left:48.30px;top:380.78px;font-size:18.841px;line-height:18.841px;font-weight:400;color:#000000;transform:scaleX(0.8241);transform-origin:0 0;">APRIL</div>
<div class="t" style="left:261.90px;top:380.87px;font-size:18.261px;line-height:18.261px;font-weight:400;color:#000000;transform:scaleX(0.9727);transform-origin:0 0;">$1,400</div>
<div class="t" style="left:709.50px;top:378.50px;font-size:21.304px;line-height:21.304px;font-weight:400;color:#000000;transform:scaleX(1.0732);transform-origin:0 0;">April</div>
<div class="t" style="left:47.15px;top:413.78px;font-size:18.841px;line-height:18.841px;font-weight:400;color:#000000;transform:scaleX(0.9730);transform-origin:0 0;">MAY</div>
<div class="t" style="left:261.90px;top:413.87px;font-size:18.261px;line-height:18.261px;font-weight:400;color:#000000;transform:scaleX(0.9727);transform-origin:0 0;">$1,050</div>
<div class="t" style="left:708.13px;top:411.50px;font-size:21.304px;line-height:21.304px;font-weight:400;color:#000000;transform:scaleX(1.0868);transform-origin:0 0;">May</div>
<div class="t" style="left:46.50px;top:446.78px;font-size:18.841px;line-height:18.841px;font-weight:400;color:#000000;transform:scaleX(0.8625);transform-origin:0 0;">JUNE</div>
<div class="t" style="left:277.30px;top:446.87px;font-size:18.261px;line-height:18.261px;font-weight:400;color:#000000;transform:scaleX(0.9525);transform-origin:0 0;">$850</div>
<div class="t" style="left:709.30px;top:444.50px;font-size:21.304px;line-height:21.304px;font-weight:400;color:#000000;transform:scaleX(0.9711);transform-origin:0 0;">June</div>
<div class="t" style="left:46.50px;top:479.78px;font-size:18.841px;line-height:18.841px;font-weight:400;color:#000000;transform:scaleX(0.8386);transform-origin:0 0;">JULY</div>
<div class="t" style="left:261.90px;top:479.87px;font-size:18.261px;line-height:18.261px;font-weight:400;color:#000000;transform:scaleX(0.9727);transform-origin:0 0;">$2,000</div>
<div class="t" style="left:709.10px;top:477.50px;font-size:21.304px;line-height:21.304px;font-weight:400;color:#000000;transform:scaleX(0.9474);transform-origin:0 0;">July</div>
<div class="t" style="left:48.30px;top:512.78px;font-size:18.841px;line-height:18.841px;font-weight:400;color:#000000;transform:scaleX(0.8641);transform-origin:0 0;">AUGUST</div>
<div class="t" style="left:261.90px;top:512.87px;font-size:18.261px;line-height:18.261px;font-weight:400;color:#000000;transform:scaleX(0.9704);transform-origin:0 0;">$2,011</div>
<div class="t" style="left:709.50px;top:510.50px;font-size:21.304px;line-height:21.304px;font-weight:400;color:#000000;transform:scaleX(0.9970);transform-origin:0 0;">August</div>
<div class="t" style="left:48.06px;top:545.78px;font-size:18.841px;line-height:18.841px;font-weight:400;color:#000000;transform:scaleX(0.8377);transform-origin:0 0;">SEPTEMBER</div>
<div class="t" style="left:263.60px;top:545.87px;font-size:18.261px;line-height:18.261px;font-weight:400;color:#000000;transform:scaleX(0.9600);transform-origin:0 0;">$1, 000</div>
<div class="t" style="left:708.67px;top:543.50px;font-size:21.304px;line-height:21.304px;font-weight:400;color:#000000;transform:scaleX(1.0291);transform-origin:0 0;">September</div>
<div class="t" style="left:47.86px;top:578.78px;font-size:18.841px;line-height:18.841px;font-weight:400;color:#000000;transform:scaleX(0.8407);transform-origin:0 0;">OCTOBER</div>
<div class="t" style="left:261.90px;top:578.87px;font-size:18.261px;line-height:18.261px;font-weight:400;color:#000000;transform:scaleX(0.9727);transform-origin:0 0;">$1,050</div>
<div class="t" style="left:708.66px;top:576.50px;font-size:21.304px;line-height:21.304px;font-weight:400;color:#000000;transform:scaleX(1.0400);transform-origin:0 0;">October</div>
<div class="t" style="left:47.32px;top:611.78px;font-size:18.841px;line-height:18.841px;font-weight:400;color:#000000;transform:scaleX(0.8886);transform-origin:0 0;">NOVEMBER</div>
<div class="t" style="left:261.90px;top:611.87px;font-size:18.261px;line-height:18.261px;font-weight:400;color:#000000;transform:scaleX(0.9727);transform-origin:0 0;">$5,000</div>
<div class="t" style="left:707.98px;top:609.50px;font-size:21.304px;line-height:21.304px;font-weight:400;color:#000000;transform:scaleX(1.0594);transform-origin:0 0;">November</div>
<div class="t" style="left:47.38px;top:644.78px;font-size:18.841px;line-height:18.841px;font-weight:400;color:#000000;transform:scaleX(0.8612);transform-origin:0 0;">DECEMBER</div>
<div class="t" style="left:261.90px;top:644.87px;font-size:18.261px;line-height:18.261px;font-weight:400;color:#000000;transform:scaleX(0.9727);transform-origin:0 0;">$1,400</div>
<div class="t" style="left:708.04px;top:642.50px;font-size:21.304px;line-height:21.304px;font-weight:400;color:#000000;transform:scaleX(1.0312);transform-origin:0 0;">December</div>
<div class="t" style="left:114.79px;top:684.46px;font-size:13.188px;line-height:13.188px;font-weight:400;color:#444444;transform:scaleX(0.9100);transform-origin:0 0;">Sheet1</div>
<div class="t" style="left:178.57px;top:684.86px;font-size:13.188px;line-height:13.188px;font-weight:700;color:#1e6e42;transform:scaleX(0.9310);transform-origin:0 0;">Sheet2</div>
<div class="t" style="left:10.20px;top:711.26px;font-size:10.580px;line-height:10.580px;font-weight:400;color:#444444;transform:scaleX(1.0034);transform-origin:0 0;">Ready</div>
<div class="t" style="left:55.90px;top:711.26px;font-size:10.580px;line-height:10.580px;font-weight:400;color:#444444;transform:scaleX(1.1000);transform-origin:0 0;">Workbook Statistics</div>
<div class="t" style="left:196.80px;top:711.26px;font-size:10.580px;line-height:10.580px;font-weight:400;color:#444444;transform:scaleX(1.0667);transform-origin:0 0;">Accessibility: Investigate</div>
<div class="t" style="left:631.36px;top:711.99px;font-size:11.014px;line-height:11.014px;font-weight:400;color:#444444;transform:scaleX(1.0391);transform-origin:0 0;">Count: 12</div>
<div class="t" style="left:965.04px;top:711.59px;font-size:11.014px;line-height:11.014px;font-weight:400;color:#444444;transform:scaleX(0.9630);transform-origin:0 0;">166%</div>
</body></html>
